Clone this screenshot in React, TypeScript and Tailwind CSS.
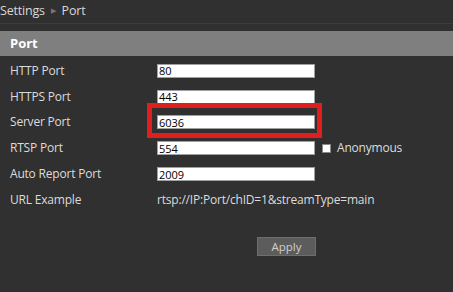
import React from "react";

const rows = [
  { label: "HTTP Port", value: "80" },
  { label: "HTTPS Port", value: "443" },
  { label: "Server Port", value: "6036" },
  { label: "RTSP Port", value: "554", anon: true },
  { label: "Auto Report Port", value: "2009" },
];

export default function App() {
  return (
    <div
      className="relative w-[453px] h-[292px] bg-[#303030] text-[#dcdcdc] overflow-hidden"
      style={{ fontFamily: '"Open Sans", "Noto Sans", sans-serif' }}
    >
      <div className="h-[24px] flex items-center text-[12.5px] tracking-[-0.2px] text-[#d8d8d8] border-b border-[#3c3c3c]">
        <span>Settings</span>
        <span className="mx-[6px] text-[7px] text-[#777]">▶</span>
        <span>Port</span>
      </div>
      <div className="mt-[7px] h-[25px] bg-[#7f7f7f] flex items-center pl-[10px] text-[13px] font-bold text-white">
        Port
      </div>
      <div className="pt-[2px]">
        {rows.map((r) => (
          <div key={r.label} className="h-[25.8px] flex items-center text-[12px] tracking-[-0.2px]">
            <div className="w-[157px] pl-[10px]">{r.label}</div>
            <div className="w-[158px] h-[14px] bg-white border border-[#a0a0a0] flex items-center pl-[1px] text-[11px] tracking-normal text-black leading-none">
              {r.value}
            </div>
            {r.anon && (
              <div className="flex items-center ml-[7px]">
                <div className="w-[9px] h-[9px] bg-white border border-[#888]" />
                <span className="ml-[6px]">Anonymous</span>
              </div>
            )}
          </div>
        ))}
        <div className="h-[25.8px] flex items-center text-[12px] tracking-[-0.2px]">
          <div className="w-[157px] pl-[10px]">URL Example</div>
          <div>rtsp://IP:Port/chID=1&amp;streamType=main</div>
        </div>
      </div>
      <div className="mt-[24px] pl-[257px]">
        <button className="w-[59px] h-[19px] bg-[#5c5c5c] border border-[#6e6e6e] text-[11.5px] text-[#cfcfcf] flex items-center justify-center">
          Apply
        </button>
      </div>
      <div className="absolute left-[147px] top-[103px] w-[175px] h-[35px] border-[5px] border-[#e01e1e]" />
    </div>
  );
}
